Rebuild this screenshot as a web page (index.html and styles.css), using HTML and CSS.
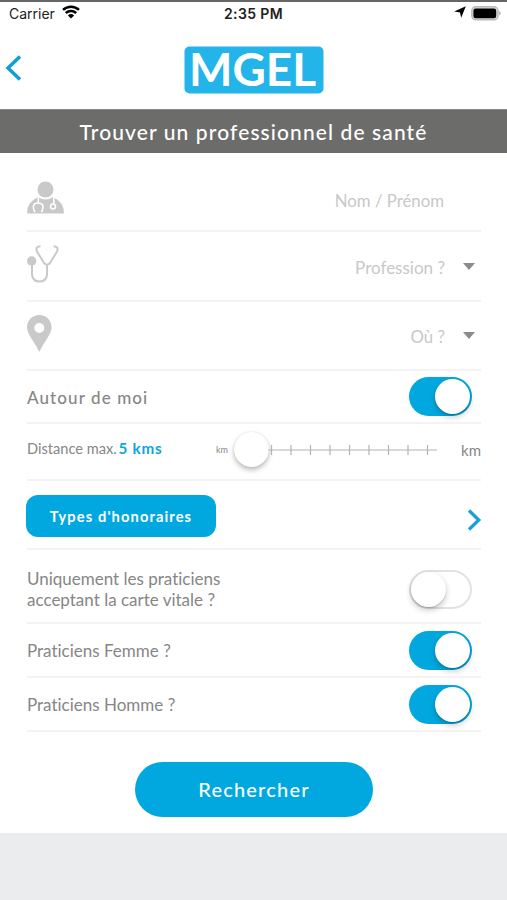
FILE: index.html
```
<!DOCTYPE html>
<html lang="fr">
<head>
  <meta charset="UTF-8">
  <title>MGEL - Trouver un professionnel de santé</title>
  <link rel="stylesheet" href="styles.css">
</head>
<body>
  <div class="status">
    <div class="carrier">
      <span>Carrier</span>
      <svg width="18" height="14" viewBox="0 0 18 14">
        <path d="M1 4.9a11.6 11.6 0 0 1 16 0M3.8 8a7.6 7.6 0 0 1 10.4 0" fill="none" stroke="#000" stroke-width="2.5"/>
        <path d="M9 13.6L5.9 10.5a4.5 4.5 0 0 1 6.2 0z"/>
      </svg>
    </div>
    <div class="time">2:35 PM</div>
    <div class="battery">
      <svg width="12" height="12" viewBox="0 0 12 12"><path d="M11.8.2L7.2 11.8 6 6.6.2 5.5z"/></svg>
      <svg width="30" height="15" viewBox="0 0 30 15">
        <rect x="0.8" y="0.8" width="26.2" height="13" rx="4" fill="#ddd" stroke="#bbb" stroke-width="1.5"/>
        <rect x="2.4" y="2.6" width="22.8" height="9.6" rx="2.2"/>
        <path d="M28 5q1.8.6 1.8 2.2T28 9.4z" fill="#bbb"/>
      </svg>
    </div>
  </div>

  <header class="header">
    <svg class="back" width="18" height="28" viewBox="0 0 18 28"><path d="M15 2.5L3 14l12 11.5" fill="none" stroke="#0f9fd8" stroke-width="3.5"/></svg>
    <svg class="logo" width="140" height="48" viewBox="0 0 140 48">
      <rect x="0.5" y="0.5" width="139" height="47" rx="5" fill="#23b5ea"/>
      <text x="5" y="40" textLength="127" lengthAdjust="spacingAndGlyphs">MGEL</text>
    </svg>
  </header>

  <h1>Trouver un professionnel de santé</h1>

  <main>
    <div class="row row-name">
      <svg width="37" height="34" viewBox="0 0 37 34">
        <circle cx="18.5" cy="8.5" r="8" fill="#c9c9c9"/>
        <path d="M0 32.5q-.5-11 11-16.5 7.5 5 15 0Q37.5 21.5 37 32.5z" fill="#c9c9c9"/>
        <path d="M11.3 16v6M8.5 30.5H7.500q-3.500-8.500 3.700-8.500t3.700 8.500h-1" fill="none" stroke="#fff" stroke-width="1.5"/>
        <path d="M26.8 16v7" stroke="#fff" stroke-width="1.5"/>
        <circle cx="26" cy="25.5" r="2.5" fill="#c9c9c9" stroke="#fff" stroke-width="1.5"/>
      </svg>
      <span class="placeholder">Nom / Prénom</span>
    </div>
    <div class="row row-job">
      <svg width="32" height="38" viewBox="0 0 32 38">
        <circle cx="4.7" cy="16" r="4.7" fill="#c9c9c9"/>
        <path d="M13.5 1.2Q8 1.5 10 6.5L17 18q3 3.600 6 0l7-11.500q2-5-3.500-5.300M20 20v10q-1 6.500-7.500 6.500T5 30V17" fill="none" stroke="#c9c9c9" stroke-width="2"/>
      </svg>
      <span class="placeholder">Profession ?</span>
      <span class="caret"></span>
    </div>
    <div class="row row-place">
      <svg width="25" height="38" viewBox="0 0 25 38">
        <path fill="#c9c9c9" fill-rule="evenodd" d="M12.3 0C5.5 0 0 5.5 0 12.3c0 6.500 6.500 13 12.300 24.700 5.800-11.700 12.300-18.200 12.300-24.700C24.600 5.500 19.100 0 12.300 0zm0 8a5 5 0 1 1 0 10 5 5 0 0 1 0-10z"/>
      </svg>
      <span class="placeholder">Où ?</span>
      <span class="caret"></span>
    </div>
    <div class="row row-around">
      <span class="strong">Autour de moi</span>
      <span class="switch on"></span>
    </div>
    <div class="row row-distance">
      <span class="distance">Distance max. <b>5 kms</b></span>
      <span class="km-small">km</span>
      <span class="slider">
        <span class="knob"></span>
        <svg width="170" height="12" viewBox="0 0 170 12">
          <path d="M0 6h169M3.5 1v10M23 1v10M42.5 1v10M62 1v10M81.5 1v10M101 1v10M120.5 1v10M140 1v10M159.5 1v10" fill="none" stroke="#b3b3b3" stroke-width="1.2"/>
        </svg>
      </span>
      <span class="km">km</span>
    </div>
    <div class="row row-fees">
      <button class="fees">Types d'honoraires</button>
      <svg class="next" width="14" height="22" viewBox="0 0 14 22"><path d="M2 1.5L11.8 11 2 20.5" fill="none" stroke="#1a9fd8" stroke-width="3.3"/></svg>
    </div>
    <div class="row row-card">
      <span class="label">Uniquement les praticiens<br>acceptant la carte vitale ?</span>
      <span class="switch"></span>
    </div>
    <div class="row row-gender">
      <span class="label">Praticiens Femme ?</span>
      <span class="switch on"></span>
    </div>
    <div class="row row-gender">
      <span class="label">Praticiens Homme ?</span>
      <span class="switch on"></span>
    </div>
    <button class="search">Rechercher</button>
  </main>
</body>
</html>
```
FILE: styles.css
```
* {
  box-sizing: border-box;
}

body {
  margin: 0;
  min-height: 900px;
  background-color: #ebecee;
  color: #868686;
  font-family: Lato, sans-serif;
  font-variant-ligatures: none;
}

svg {
  display: block;
  flex-shrink: 0;
  overflow: visible;
}

.status {
  display: grid;
  grid-template-columns: 1fr auto 1fr;
  height: 28px;
  padding: 3px 6px 0 9px;
  border-top: 2px solid #666;
  background-color: #fff;
  color: #222;
  font: 14px/18px Inter, sans-serif;
}

.carrier {
  display: flex;
  gap: 7px;
}

.time {
  margin-right: 3px;
  font-weight: 600;
  letter-spacing: 0.4px;
}

.battery {
  display: flex;
  justify-content: flex-end;
  gap: 5px;
  padding-top: 1px;
}

.header {
  display: flex;
  height: 81px;
  background-color: #fff;
}

.back {
  margin: 26px 0 0 5px;
}

.logo {
  margin: 18px 0 0 161px;
}

.logo text {
  fill: #fff;
  font: bold 45px Lato, sans-serif;
}

h1 {
  height: 44px;
  margin: 0;
  border-top: 1px solid #8a8a89;
  background-color: #6c6c6b;
  color: #fff;
  font-size: 21px;
  font-weight: 500;
  line-height: 43px;
  letter-spacing: 1.1px;
  text-align: center;
}

main {
  height: 680px;
  padding: 0 26px 0 27px;
  background-color: #fff;
}

.row {
  display: flex;
  align-items: center;
  justify-content: space-between;
  border-bottom: 2px solid #f3f3f3;
}

.row-name, .row-job, .row-place {
  align-items: flex-start;
}

.row-name {
  height: 79px;
  padding-top: 28px;
}

.row-job {
  height: 70px;
  padding-top: 13px;
}

.row-place {
  height: 69px;
  padding-top: 13px;
}

.placeholder {
  margin: 10px 37px 0 auto;
  color: #c8c8c8;
  font-size: 16.8px;
  line-height: 20px;
}

.row-job .placeholder {
  margin: 13px 18px 0 auto;
  font-size: 17px;
}

.row-place .placeholder {
  margin: 12px 18px 0 auto;
}

.caret {
  margin: 17px 6px 0 0;
  border: 6.5px solid transparent;
  border-top: 7px solid #8b8b8b;
  border-bottom: 0;
}

.row-job .caret {
  margin-top: 18px;
}

.row-around {
  height: 53px;
}

.strong {
  margin-top: 1px;
  font-size: 17px;
  font-weight: 500;
  letter-spacing: 1.1px;
}

.switch {
  display: flex;
  width: 63px;
  height: 39px;
  margin-right: 9px;
  padding: 2px;
  border: 2px solid #e2e2e2;
  border-radius: 20px;
  background-color: #fff;
}

.switch::before {
  content: "";
  width: 35px;
  height: 35px;
  margin: -2px 0 0 -2px;
  border-radius: 50%;
  background-color: #fff;
  box-shadow: 0 3px 6px rgba(0, 0, 0, 0.22), 0 1px 1px rgba(0, 0, 0, 0.15);
}

.switch.on {
  justify-content: flex-end;
  border: 0;
  background-color: #00a8df;
}

.switch.on::before {
  margin: 0;
}

.row-distance {
  height: 57px;
  padding-bottom: 4px;
  justify-content: flex-start;
}

.distance {
  width: 189px;
  padding-bottom: 4px;
  font-size: 14.6px;
}

.distance b {
  margin-left: -2px;
  color: #0ca6dc;
  font-size: 15.2px;
  letter-spacing: 0.8px;
}

.km-small {
  width: 18px;
  font-size: 9px;
}

.slider {
  display: flex;
  align-items: center;
}

.knob {
  width: 35px;
  height: 35px;
  border-radius: 50%;
  background-color: #fff;
  box-shadow: 0 3px 5px rgba(0, 0, 0, 0.25), 0 0 2px rgba(0, 0, 0, 0.12);
}

.slider svg {
  margin-left: -1px;
}

.km {
  margin-left: auto;
  font-size: 15px;
}

.row-fees {
  height: 69px;
}

button {
  border: 0;
  background-color: #00a8df;
  color: #fff;
  font-family: Lato, sans-serif;
}

.fees {
  width: 190px;
  height: 42px;
  margin: 2px 0 0 -1px;
  border-radius: 12px;
  font-size: 14.7px;
  font-weight: bold;
  letter-spacing: 1.1px;
}

.next {
  margin-top: 10px;
}

.row-card {
  height: 74px;
}

.row-gender {
  height: 54px;
}

.label {
  font-size: 17px;
  line-height: 21px;
}

.row-card .label, .row-card .switch {
  margin-top: 6px;
}

.search {
  display: block;
  width: 238px;
  height: 55px;
  margin: 30px auto 0;
  padding-bottom: 2px;
  border-radius: 28px;
  font-size: 20px;
  font-weight: 500;
  letter-spacing: 1.2px;
}
```
